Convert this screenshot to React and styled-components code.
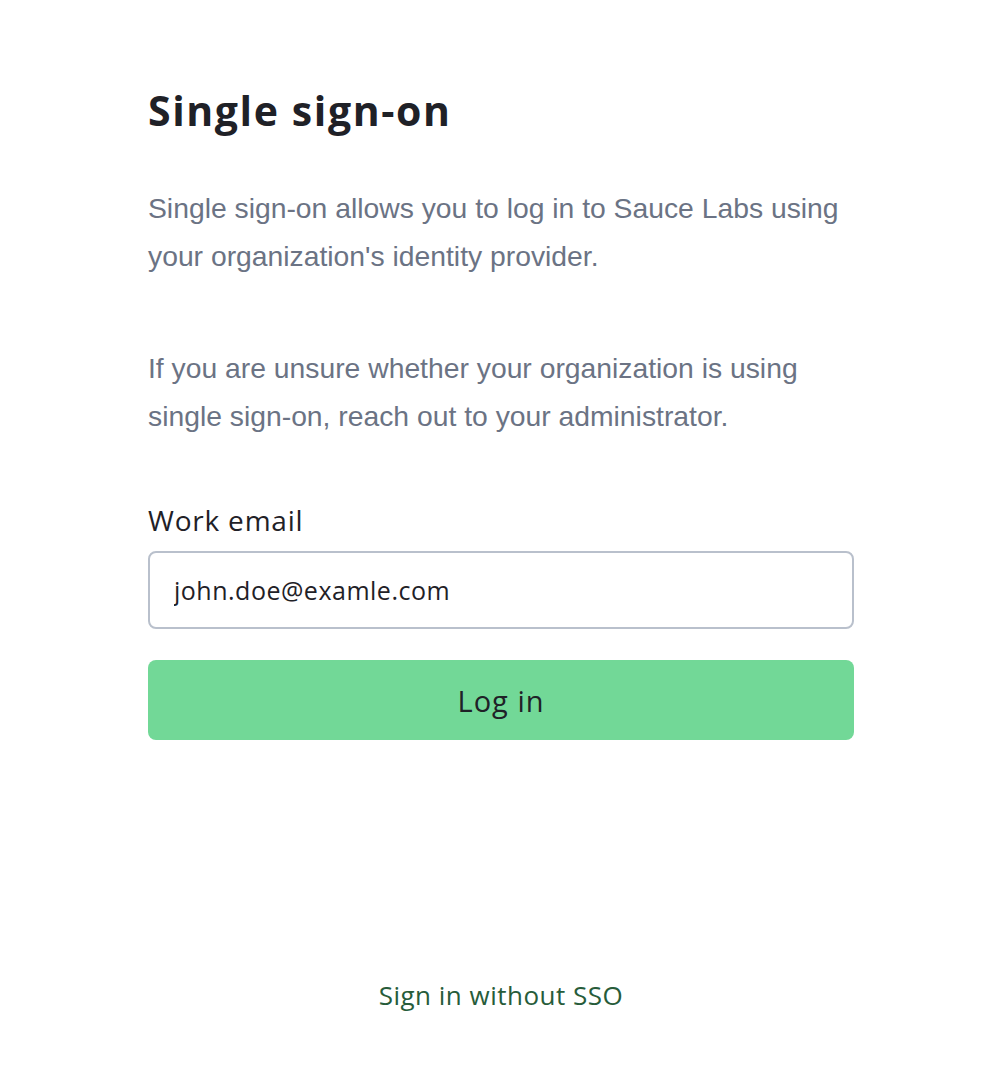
import React from "react";
import styled, { createGlobalStyle } from "styled-components";

const Global = createGlobalStyle`
  html, body { margin: 0; padding: 0; background: #ffffff; }
  * { box-sizing: border-box; }
`;

const Page = styled.main`
  width: 1002px;
  min-height: 1088px;
  display: flex;
  flex-direction: column;
  padding: 86px 148px 0 148px;
`;

const Title = styled.h1`
  margin: 0;
  font-family: "Open Sans", "Lato", sans-serif;
  font-weight: 700;
  font-size: 41px;
  line-height: 48px;
  letter-spacing: 1.6px;
  color: #1f2127;
`;

const Text = styled.p`
  margin: ${(p) => p.$top}px 0 0 0;
  font-family: "Liberation Sans", Arial, sans-serif;
  font-size: 28.3px;
  line-height: 48px;
  color: #6b7384;
`;

const Form = styled.form`
  display: flex;
  flex-direction: column;
  margin-top: 62px;
`;

const Label = styled.label`
  font-family: "Open Sans", "Lato", sans-serif;
  font-size: 28px;
  line-height: 36px;
  letter-spacing: 0.8px;
  color: #1f2127;
`;

const Input = styled.input`
  margin-top: 13px;
  height: 78px;
  width: 100%;
  border: 2px solid #b9c0cc;
  border-radius: 8px;
  padding: 0 24px;
  font-family: "Open Sans", "Lato", sans-serif;
  font-size: 25px;
  letter-spacing: 0.5px;
  color: #1f2127;
  outline: none;
`;

const Button = styled.button`
  margin-top: 31px;
  height: 80px;
  width: 100%;
  border: none;
  border-radius: 8px;
  background: #72d897;
  font-family: "Open Sans", "Lato", sans-serif;
  font-size: 29px;
  letter-spacing: 1px;
  color: #1f2127;
  cursor: pointer;
`;

const Footer = styled.div`
  display: flex;
  justify-content: center;
  margin-top: 237px;
`;

const Link = styled.a`
  font-family: "Open Sans", "Lato", sans-serif;
  font-size: 26px;
  line-height: 36px;
  letter-spacing: 0.5px;
  color: #275c3a;
  text-decoration: none;
`;

export default function App() {
  return (
    <>
      <Global />
      <Page>
        <Title>Single sign-on</Title>
        <Text $top={50}>
          Single sign-on allows you to log in to Sauce Labs using your organization's identity provider.
        </Text>
        <Text $top={64}>
          If you are unsure whether your organization is using single sign-on, reach out to your administrator.
        </Text>
        <Form onSubmit={(e) => e.preventDefault()}>
          <Label htmlFor="email">Work email</Label>
          <Input id="email" type="email" defaultValue="john.doe@examle.com" />
          <Button type="submit">Log in</Button>
        </Form>
        <Footer>
          <Link href="#">Sign in without SSO</Link>
        </Footer>
      </Page>
    </>
  );
}
